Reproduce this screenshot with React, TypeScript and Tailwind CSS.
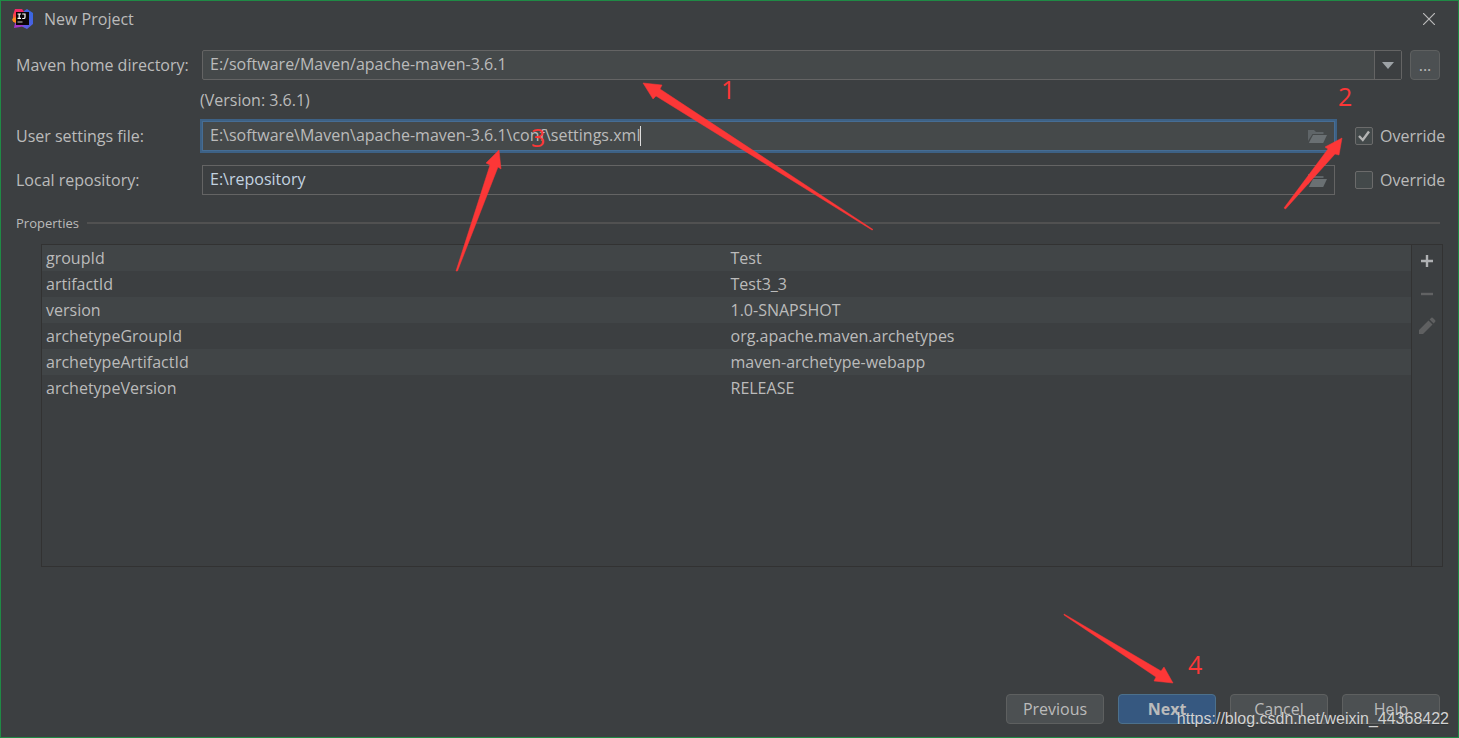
import React, { useState } from 'react'

const properties = [
    { name: 'groupId', value: 'Test' },
    { name: 'artifactId', value: 'Test3_3' },
    { name: 'version', value: '1.0-SNAPSHOT' },
    { name: 'archetypeGroupId', value: 'org.apache.maven.archetypes' },
    { name: 'archetypeArtifactId', value: 'maven-archetype-webapp' },
    { name: 'archetypeVersion', value: 'RELEASE' },
]

const Logo = () => (
    <svg width="22" height="22" viewBox="0 0 22 22" aria-hidden="true">
        <defs>
            <linearGradient id="logoBlue" x1="0" y1="1" x2="1" y2="0">
                <stop offset="0" stopColor="#6b57e8" />
                <stop offset="1" stopColor="#2f6be0" />
            </linearGradient>
            <linearGradient id="logoPink" x1="0" y1="1" x2="1" y2="0">
                <stop offset="0" stopColor="#f97a12" />
                <stop offset="0.5" stopColor="#f82a63" />
                <stop offset="1" stopColor="#e8286c" />
            </linearGradient>
        </defs>
        <path d="M12 3 L15 1 L21 5 V16 L15 21 L9 18 Z" fill="url(#logoBlue)" />
        <path d="M1 7 L3 1 L10 1 L13 5 L6 14 L1 14 Z" fill="url(#logoPink)" />
        <path d="M1 10 L5 9 V16 L3 15 L0 12 Z" fill="#fb8a1e" />
        <path d="M3 15 L6 14 L12 18 L8 19 L2 20 Z" fill="#a436c9" />
        <rect x="4" y="4" width="13" height="13" fill="#0b0507" />
        <path d="M5.5 6 H9 M7.2 6 V10.4 M5.5 10.4 H9 M10.2 6 H13 V9.2 Q13 10.5 11.6 10.5 H10.2" fill="none" stroke="#fff" strokeWidth="1.2" />
        <path d="M5.5 14 H10.5" stroke="#aaa" strokeWidth="1.2" />
    </svg>
)

const FolderIcon = () => (
    <svg width="19" height="15" viewBox="0 0 19 15" aria-hidden="true">
        <path d="M0 1 H6 L8 3 H15.5 V5 H4.5 L0 12 Z" fill="#5f6568" />
        <path d="M5 6 H19 L15.2 14 H0.8 Z" fill="#6a7073" />
    </svg>
)

const Override = ({ id, checked }: { id: string, checked: boolean }) => {
    const [on, setOn] = useState(checked)

    return (
        <div className="ml-5 flex items-center">
            <span className="relative flex">
                <input
                    id={id}
                    type="checkbox"
                    checked={on}
                    onChange={() => setOn(!on)}
                    className="h-[18px] w-[18px] appearance-none rounded-xs border border-[#6b6b6b] bg-[#43494a]"
                />
                {on && (
                    <svg className="pointer-events-none absolute left-0 top-0" width="18" height="18" viewBox="0 0 18 18" aria-hidden="true">
                        <path d="M4 9 L7.8 13 L14 4.5" fill="none" stroke="#b4b4b4" strokeWidth="2.4" />
                    </svg>
                )}
            </span>
            <label htmlFor={id} className="w-[70px] pl-[7px] whitespace-nowrap">Override</label>
        </div>
    )
}

const buttonStyle = 'h-[30px] w-[98px] rounded-[4px] border'

// Red arrows and step numbers drawn over the dialog
const Annotations = () => (
    <svg className="pointer-events-none absolute -left-px -top-px" width="1459" height="738" viewBox="0 0 1459 738" aria-hidden="true">
        <g fill="#fc3737" stroke="#fc3737" strokeWidth="0.5">
            <path d="M643 83 L662 85 L660 89 L873 229.5 L872 230 L656 96 L653 99 Z" />
            <path d="M1342 138 L1325 147 L1328 149 L1284 208 L1285.5 209 L1335 154 L1339 155 Z" />
            <path d="M499 150 L486 163 L490 165 L456 271 L457.5 271 L498 167 L501 169 Z" />
            <path d="M1173 683 L1164 667 L1161 671 L1064 614 L1064 615 L1156 677 L1154 681 Z" />
        </g>
        <g fill="#fc3737" fontSize="25" fontFamily="'Open Sans', sans-serif">
            <text x="721" y="99">1</text>
            <text x="1338" y="106">2</text>
            <text x="531" y="147">3</text>
            <text x="1188" y="674">4</text>
        </g>
    </svg>
)

const App = () => {
    return (
        <div className="relative flex min-h-screen flex-col overflow-hidden border border-[#1f8a45] bg-[#3c3f41] pr-[15px] pl-[15px] font-['Open_Sans',sans-serif] text-[16px] leading-5 text-[#bbbbbb]">
            <header className="flex h-9 items-center justify-between pr-2">
                <div className="flex items-center gap-[10px] -ml-1">
                    <Logo />
                    <h1>New Project</h1>
                </div>
                <button aria-label="Close">
                    <svg width="12" height="12" viewBox="0 0 12 12"><path d="M0 0 L12 12 M12 0 L0 12" stroke="#bbb" strokeWidth="1.2" /></svg>
                </button>
            </header>

            <form className="mt-[13px] flex flex-col" onSubmit={(e) => e.preventDefault()}>
                <div className="flex items-center pr-[3px]">
                    <label htmlFor="home" className="w-[186px] whitespace-nowrap">Maven home directory:</label>
                    <div className="relative flex-1">
                        <select id="home" className="block h-[30px] w-full appearance-none rounded-xs border border-[#646464] bg-[#45494a] pb-[2px] pl-[7px]">
                            <option>E:/software/Maven/apache-maven-3.6.1</option>
                        </select>
                        <span className="pointer-events-none absolute inset-y-px right-px flex w-[27px] items-center justify-center border-l border-[#646464] bg-[#3c3f41]">
                            <svg width="12" height="7" viewBox="0 0 12 7"><path d="M0 0 H12 L6 7 Z" fill="#9da2a6" /></svg>
                        </span>
                    </div>
                    <button className="ml-2 h-[30px] w-[30px] rounded-[4px] border border-[#5e6060] bg-[#4c5052]">...</button>
                </div>

                <p className="mt-[10px] pl-[184px]">(Version: 3.6.1)</p>

                <div className="mt-[11px] flex items-center">
                    <label htmlFor="settings" className="w-[186px]">User settings file:</label>
                    <div className="flex h-[30px] flex-1 items-center border border-[#466d94] bg-[#45494a] pr-[7px] pl-[7px] ring-2 ring-[#3d6185]">
                        <input id="settings" className="field-sizing-content pb-[2px] outline-none" defaultValue="E:\software\Maven\apache-maven-3.6.1\conf\settings.xml" />
                        <span className="h-5 w-px bg-[#dddddd]" />
                        <button aria-label="Browse settings file" className="ml-auto"><FolderIcon /></button>
                    </div>
                    <Override id="override-settings" checked={true} />
                </div>

                <div className="mt-[14px] flex items-center">
                    <label htmlFor="repository" className="w-[186px]">Local repository:</label>
                    <div className="flex h-[30px] flex-1 items-center border border-[#646464] pr-[7px] pl-[7px]">
                        <input id="repository" className="flex-1 pb-[2px] text-[#c3d3e0] outline-none" defaultValue="E:\repository" />
                        <button aria-label="Browse local repository"><FolderIcon /></button>
                    </div>
                    <Override id="override-repository" checked={false} />
                </div>
            </form>

            <section className="mt-[18px] flex flex-1 flex-col">
                <div className="flex items-center gap-2 pr-[3px]">
                    <h2 className="text-[13px]">Properties</h2>
                    <hr className="flex-1 border-t-2 border-[#515151]" />
                </div>
                <div className="mt-[11px] ml-[25px] flex flex-1 border border-[#323232]">
                    <div className="flex-1">
                        <table className="w-full table-fixed">
                            <tbody>
                                {properties.map((item) => (
                                    <tr key={item.name} className="h-[26px] odd:bg-[#414547]">
                                        <td className="pl-1">{item.name}</td>
                                        <td className="pl-1">{item.value}</td>
                                    </tr>
                                ))}
                            </tbody>
                        </table>
                    </div>
                    <div className="flex w-[31px] flex-col items-center gap-4 border-l border-[#323232] pt-2">
                        <button aria-label="Add">
                            <svg width="16" height="16" viewBox="0 0 16 16"><path d="M2 8 H14 M8 2 V14" stroke="#afb1b3" strokeWidth="2.4" /></svg>
                        </button>
                        <button aria-label="Remove" disabled>
                            <svg width="16" height="16" viewBox="0 0 16 16"><path d="M2 9 H14" stroke="#616263" strokeWidth="2.4" /></svg>
                        </button>
                        <button aria-label="Edit" disabled>
                            <svg width="18" height="18" viewBox="0 0 18 18"><path d="M1 13 L10.5 3.5 L14.5 7.5 L5 17 H1 Z M11.6 2.4 L13.3 0.7 Q14 0.2 14.7 0.7 L17.2 3.2 Q17.8 4 17.2 4.7 L15.6 6.4 Z" fill="#5f6061" /></svg>
                        </button>
                    </div>
                </div>
            </section>

            <footer className="mt-[127px] mb-[13px] flex justify-end gap-[14px] pr-[3px]">
                <button className={`${buttonStyle} border-[#5e6060] bg-[#4c5052]`}>Previous</button>
                <button className={`${buttonStyle} border-[#4c708c] bg-[#365880] font-bold`}>Next</button>
                <button className={`${buttonStyle} border-[#5e6060] bg-[#4c5052]`}>Cancel</button>
                <button className={`${buttonStyle} border-[#5e6060] bg-[#4c5052]`}>Help</button>
            </footer>

            <Annotations />
            <span className="pointer-events-none absolute right-[9px] bottom-2 font-['Liberation_Sans',sans-serif] text-[16px] text-[#d2d2d2] text-shadow-xs">
                https://blog.csdn.net/weixin_44368422
            </span>
        </div>
    )
}

export default App
